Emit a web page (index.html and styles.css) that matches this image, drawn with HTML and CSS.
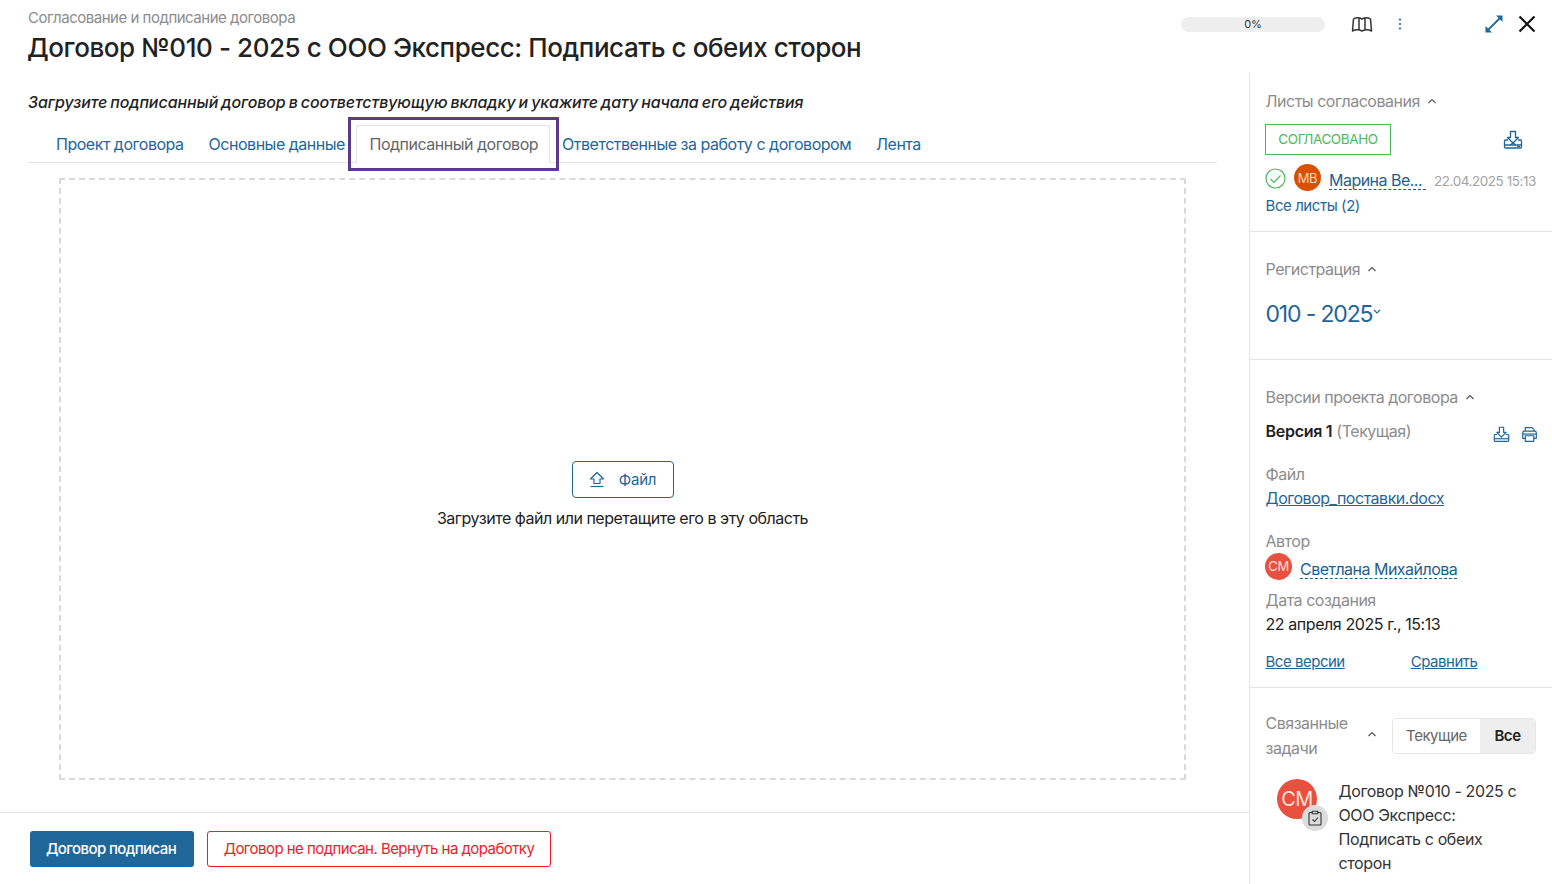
FILE: index.html
```html
<!DOCTYPE html>
<html lang="ru">
<head>
<meta charset="utf-8">
<title>Договор</title>
<link rel="stylesheet" href="styles.css">
</head>
<body>
<div class="app">
  <header class="header">
    <div class="titles">
      <div class="crumb">Согласование и подписание договора</div>
      <h1 class="title">Договор №010 - 2025 с ООО Экспресс: Подписать с обеих сторон</h1>
    </div>
    <div class="tools">
      <div class="progress">0%</div>
      <svg class="ico-map" width="22" height="18" viewBox="0 0 22 18" fill="none" stroke="#333" stroke-width="1.500" stroke-linejoin="round"><path d="M2.500 4C5 2.300 8 2.300 11 4c3-1.700 6-1.700 8.500 0l1 12c-3-1.500-6.500-1.500-9.500 0c-3-1.500-6.500-1.500-9.500 0z"/><path d="M8 3v12M14 3v12"/></svg>
      <svg class="ico-dots" width="4" height="12" viewBox="0 0 4 12" fill="#1f6699"><circle cx="2" cy="1.500" r="1.100"/><circle cx="2" cy="6" r="1.100"/><circle cx="2" cy="10.500" r="1.100"/></svg>
      <svg class="ico-expand" width="20" height="20" viewBox="0 0 20 20" fill="none" stroke="#1f6699" stroke-width="1.800"><path d="M4 16L16 4"/><path d="M12 1.500h6.500V8z" fill="#1f6699" stroke="none"/><path d="M1.500 12v6.500H8z" fill="#1f6699" stroke="none"/></svg>
      <svg class="ico-close" width="18" height="18" viewBox="0 0 18 18" fill="none" stroke="#111" stroke-width="2.200"><path d="M1.500 1.500l15 15M16.500 1.500l-15 15"/></svg>
    </div>
  </header>
  <div class="body">
    <main class="main">
      <div class="main-top">
        <p class="hint">Загрузите подписанный договор в соответствующую вкладку и укажите дату начала его действия</p>
        <nav class="tabs">
          <a class="tab">Проект договора</a>
          <a class="tab">Основные данные</a>
          <a class="tab tab-active">Подписанный договор</a>
          <a class="tab">Ответственные за работу с договором</a>
          <a class="tab">Лента</a>
        </nav>
        <div class="drop-wrap">
          <div class="drop">
            <button class="file-btn">
              <svg width="16" height="17" viewBox="0 0 16 17" fill="none" stroke="#1f6699" stroke-width="1.200" stroke-linejoin="round"><path d="M8 1.500L14.500 8H11v4.500H5V8H1.500z"/><path d="M1.500 15.500h13"/></svg>
              <span>Файл</span>
            </button>
            <div class="drop-text">Загрузите файл или перетащите его в эту область</div>
          </div>
        </div>
      </div>
      <footer class="actions">
        <button class="btn-primary">Договор подписан</button>
        <button class="btn-danger">Договор не подписан. Вернуть на доработку</button>
      </footer>
    </main>
    <aside class="side">
      <section class="sec sec-lists">
        <div class="sec-head">Листы согласования <svg class="caret" width="10" height="6" viewBox="0 0 10 6" fill="none" stroke="#555" stroke-width="1.200"><path d="M1.500 5L5 1.500L8.500 5"/></svg></div>
        <div class="status-row">
          <span class="status">СОГЛАСОВАНО</span>
          <svg class="dl dl-big" width="20" height="20" viewBox="0 0 20 20" fill="none" stroke="#1f6699" stroke-width="1.300" stroke-linejoin="round"><path d="M7.500 1.500h5v6h3L10 13L4.500 7.500h3z"/><path d="M5 10H2.500c-.6 0-1 .4-1 1v6c0 .6.4 1 1 1h15c.6 0 1-.4 1-1v-6c0-.6-.4-1-1-1H15"/><path d="M1.500 15h17M7 15l3-2l3 2"/><path d="M14 16.500h3" stroke-width="1"/></svg>
        </div>
        <div class="sign-row">
          <svg class="check" width="21" height="21" viewBox="0 0 21 21" fill="none" stroke="#4cb85c" stroke-width="1.200"><circle cx="10.500" cy="10.500" r="9.500"/><path d="M5.500 11l3.500 3.500L15.500 7.500"/></svg>
          <span class="av av-mv">МВ</span>
          <a class="person person-trunc">Марина Ве...</a>
          <span class="date">22.04.2025 15:13</span>
        </div>
        <a class="all-link">Все листы (2)</a>
      </section>
      <section class="sec sec-reg">
        <div class="sec-head">Регистрация <svg class="caret" width="10" height="6" viewBox="0 0 10 6" fill="none" stroke="#555" stroke-width="1.200"><path d="M1.500 5L5 1.500L8.500 5"/></svg></div>
        <div class="reg-num">010 - 2025<svg class="reg-caret" width="8" height="5" viewBox="0 0 8 5" fill="none" stroke="#1f6699" stroke-width="1.100"><path d="M1 1l3 3l3-3"/></svg></div>
      </section>
      <section class="sec sec-ver">
        <div class="sec-head">Версии проекта договора <svg class="caret" width="10" height="6" viewBox="0 0 10 6" fill="none" stroke="#555" stroke-width="1.200"><path d="M1.500 5L5 1.500L8.500 5"/></svg></div>
        <div class="ver-row">
          <div><b class="ver-b">Версия 1</b> <span class="ver-cur">(Текущая)</span></div>
          <div class="ver-icons">
            <svg width="17" height="17" viewBox="0 0 20 20" fill="none" stroke="#1f6699" stroke-width="1.400" stroke-linejoin="round"><path d="M7.500 1.500h5v6h3L10 13L4.500 7.500h3z"/><path d="M5 10H2.500c-.6 0-1 .4-1 1v6c0 .6.4 1 1 1h15c.6 0 1-.4 1-1v-6c0-.6-.4-1-1-1H15"/><path d="M1.500 15h17"/></svg>
            <svg width="17" height="17" viewBox="0 0 20 20" fill="none" stroke="#1f6699" stroke-width="1.400" stroke-linejoin="round"><path d="M5 6V2h8l2.500 2.500V6"/><path d="M5 14.500H2V8c0-1 .8-2 2-2h12c1.200 0 2 1 2 2v6.500h-3"/><path d="M5 11.500h10V18H5z"/><path d="M2 9.500h16"/></svg>
          </div>
        </div>
        <div class="label lbl-file">Файл</div>
        <a class="file-link">Договор_поставки.docx</a>
        <div class="label lbl-author">Автор</div>
        <div class="author-row"><span class="av av-cm">СМ</span><a class="person">Светлана Михайлова</a></div>
        <div class="label lbl-date">Дата создания</div>
        <div class="value">22 апреля 2025 г., 15:13</div>
        <div class="ver-links"><a class="u-link">Все версии</a><a class="u-link">Сравнить</a></div>
      </section>
      <section class="sec-tasks">
        <div class="tasks-head">
          <div class="tasks-title">Связанные<br>задачи</div>
          <svg class="caret-t" width="10" height="6" viewBox="0 0 10 6" fill="none" stroke="#555" stroke-width="1.200"><path d="M1.500 5L5 1.500L8.500 5"/></svg>
          <div class="seg"><span class="seg-a">Текущие</span><span class="seg-b">Все</span></div>
        </div>
        <div class="task">
          <div class="task-av"><span class="av-lg">СМ</span>
            <span class="task-badge"><svg width="14" height="16" viewBox="0 0 14 16" fill="none" stroke="#333" stroke-width="1.100"><path d="M4 2.500H2c-.5 0-1 .5-1 1V14c0 .5.500 1 1 1h10c.5 0 1-.5 1-1V3.500c0-.5-.5-1-1-1h-2"/><path d="M4.200 1.200h5.600v2.600H4.200z"/><path d="M4.500 9.500l2 2l3.500-4"/></svg></span>
          </div>
          <div class="task-text">Договор №010 - 2025 с ООО Экспресс: Подписать с обеих сторон</div>
        </div>
      </section>
    </aside>
  </div>
</div>
</body>
</html>
```
FILE: styles.css
```css
* { box-sizing: border-box; }
html, body { margin: 0; padding: 0; height: 884px; overflow: hidden; background: #fff; }
body { font-family: Inter, "Noto Sans", sans-serif; font-size: 16px; color: #222; letter-spacing: -0.48px; }
p, h1 { margin: 0; }
button { font-family: inherit; letter-spacing: inherit; cursor: pointer; }
.app { width: 1552px; height: 884px; display: flex; flex-direction: column; }
.header { height: 73px; flex: none; display: flex; justify-content: space-between; padding: 9px 16px 0 28px; }
.crumb { font-size: 15px; line-height: 18px; color: #8c8c8c; }
.title { font-size: 26px; line-height: 32px; font-weight: 500; color: #222; margin: 5px 0 0 -1px; letter-spacing: -0.42px; }
.tools { display: flex; align-items: center; height: 30px; }
.progress { width: 144px; height: 15px; border-radius: 8px; background: #eeeeee; font-size: 11px; line-height: 15px; text-align: center; color: #333; margin-right: 26px; letter-spacing: -0.2px; }
.ico-map { margin-right: 25px; }
.ico-dots { margin-right: 82px; }
.ico-expand { margin-right: 14px; }
.body { flex: 1; display: flex; min-height: 0; }
.main { width: 1249px; flex: none; display: flex; flex-direction: column; }
.main-top { flex: 1; padding: 19px 32px 0 28px; min-height: 0; }
.hint { font-size: 16px; line-height: 20px; font-weight: 500; font-style: italic; color: #222; letter-spacing: -0.1px; word-spacing: -1.1px; }
.tabs { display: flex; align-items: flex-end; height: 51px; border-bottom: 1px solid #e3e3e8; padding-left: 15.500px; }
.tab { line-height: 20px; color: #1f6699; padding: 0 12.500px 8px; white-space: nowrap; }
.tab-active { position: relative; color: #666; background: #fff; border: 1px solid #e3e3e8; border-bottom: 0; border-radius: 3px 3px 0 0; padding: 8px 10.500px 8px 12px; margin: 0 0 -1px -1px; height: 38px; }
.tab-active::after { content: ""; position: absolute; left: -9px; right: -10px; top: -9px; bottom: -8px; border: 3px solid #5b3a8c; pointer-events: none; }
.drop-wrap { padding: 15px 0 0 31px; }
.drop { width: 1127px; height: 602px; border: 2px dashed #d9d9d9; border-radius: 2px; display: flex; flex-direction: column; align-items: center; padding-top: 281px; }
.file-btn { width: 102px; height: 37px; background: #fff; border: 1px solid #1f6699; border-radius: 4px; color: #1f6699; font-size: 15px; letter-spacing: -0.2px; display: flex; align-items: center; justify-content: center; gap: 14px; padding: 0; }
.drop-text { line-height: 20px; margin-top: 10px; color: #222; }
.actions { height: 72px; flex: none; border-top: 1px solid #e6e6e6; display: flex; align-items: flex-start; padding: 18px 0 0 30px; gap: 13px; }
.btn-primary { height: 36px; width: 164px; background: #1f6699; color: #fff; border: 0; border-radius: 3px; font-size: 15px; font-weight: 500; padding: 0 2px 2px 0; letter-spacing: -0.6px; }
.btn-danger { height: 36px; width: 344px; background: #fff; color: #ed1c2e; border: 1px solid #ed1c2e; border-radius: 3px; font-size: 15px; padding: 0 0 2px; letter-spacing: -0.55px; }
.side { flex: 1; border-left: 1px solid #e3e3e8; min-width: 0; }
.sec { padding: 0 16px 0 15.500px; border-bottom: 1px solid #e3e3e8; }
.sec-lists { height: 159px; padding-top: 18px; }
.sec-reg { height: 128px; padding-top: 27px; }
.sec-ver { height: 328px; padding-top: 27px; }
.sec-head { line-height: 20px; color: #8c8c8c; display: flex; align-items: center; gap: 7px; }
.caret { margin-top: -1px; }
.status-row { display: flex; justify-content: space-between; align-items: center; margin-top: 13px; padding-right: 13px; }
.status { width: 126px; height: 31px; margin-left: -0.500px; border: 1px solid #4cb85c; color: #4cb85c; font-size: 13.500px; line-height: 29px; text-align: center; letter-spacing: -0.4px; }
.sign-row { display: flex; align-items: center; margin-top: 8px; height: 30px; }
.check { flex: none; margin-left: -0.500px; }
.av { display: inline-flex; align-items: center; justify-content: center; width: 27px; height: 27px; border-radius: 50%; color: #fff; font-size: 13px; flex: none; }
.av-mv { background: #d95100; margin-left: 8px; margin-top: -1px; color: #f6d9c7; }
.av-cm { background: #e8503f; color: #fbe0dc; margin-left: -0.500px; }
.person { color: #1f5f8f; border-bottom: 1px dashed #1f5f8f; line-height: 17px; letter-spacing: -0.52px; }
.person-trunc { margin-left: 8px; margin-top: 6px; width: 97px; white-space: nowrap; flex: none; }
.date { font-size: 13.500px; color: #a3a3a3; margin-left: 8px; margin-top: 6px; white-space: nowrap; letter-spacing: -0.45px; }
.all-link { display: block; color: #1f6699; font-size: 15px; line-height: 20px; margin-top: 3px; letter-spacing: -0.43px; }
.reg-num { color: #1f6699; font-size: 23px; line-height: 30px; margin-top: 20px; display: flex; align-items: flex-start; letter-spacing: -1.15px; }
.reg-caret { margin-top: 10px; margin-left: 1px; }
.ver-row { display: flex; justify-content: space-between; margin-top: 13px; line-height: 22px; align-items: flex-start; }
.ver-b { font-weight: 600; color: #222; letter-spacing: -0.28px; }
.ver-cur { color: #8c8c8c; }
.ver-icons { display: flex; gap: 11px; margin: 6px -2px 0 0; }
.label { color: #8c8c8c; line-height: 20px; }
.lbl-file { margin-top: 21px; }
.file-link { display: block; color: #1f6699; text-decoration: underline; line-height: 20px; margin-top: 4px; }
.lbl-author { margin-top: 23px; }
.author-row { display: flex; align-items: center; gap: 8px; margin-top: 1px; height: 28px; }
.author-row .person { margin-top: 7px; }
.lbl-date { margin-top: 10px; }
.value { line-height: 20px; margin-top: 4px; color: #222; letter-spacing: -0.42px; }
.ver-links { display: flex; gap: 66px; margin-top: 18px; }
.u-link { color: #1f6699; text-decoration: underline; font-size: 15px; line-height: 20px; }
.sec-tasks { padding: 23px 16px 0 15.500px; }
.tasks-head { display: flex; align-items: flex-start; }
.tasks-title { width: 101.500px; color: #8c8c8c; line-height: 25px; }
.caret-t { margin-top: 20px; }
.seg { margin-left: 15px; margin-top: 7px; display: flex; height: 36px; width: 144px; border: 1px solid #e6e6e6; border-radius: 4px; overflow: hidden; font-size: 15px; letter-spacing: -0.45px; }
.seg-a { flex: 1; text-align: center; line-height: 34px; color: #666; }
.seg-b { width: 55px; background: #eeeeee; text-align: center; line-height: 34px; font-weight: 600; color: #222; }
.task { display: flex; padding: 18px 0 0 11.500px; }
.task-av { position: relative; width: 40px; height: 40px; flex: none; }
.av-lg { display: flex; width: 40px; height: 40px; border-radius: 50%; background: #e8503f; color: #fbe0dc; align-items: center; justify-content: center; font-size: 20px; }
.task-badge { position: absolute; left: 25px; top: 26px; width: 26px; height: 26px; border-radius: 50%; background: #dcdcdc; display: flex; align-items: center; justify-content: center; }
.task-text { margin-left: 21.500px; width: 190px; line-height: 24px; color: #333; letter-spacing: -0.36px; }
```
